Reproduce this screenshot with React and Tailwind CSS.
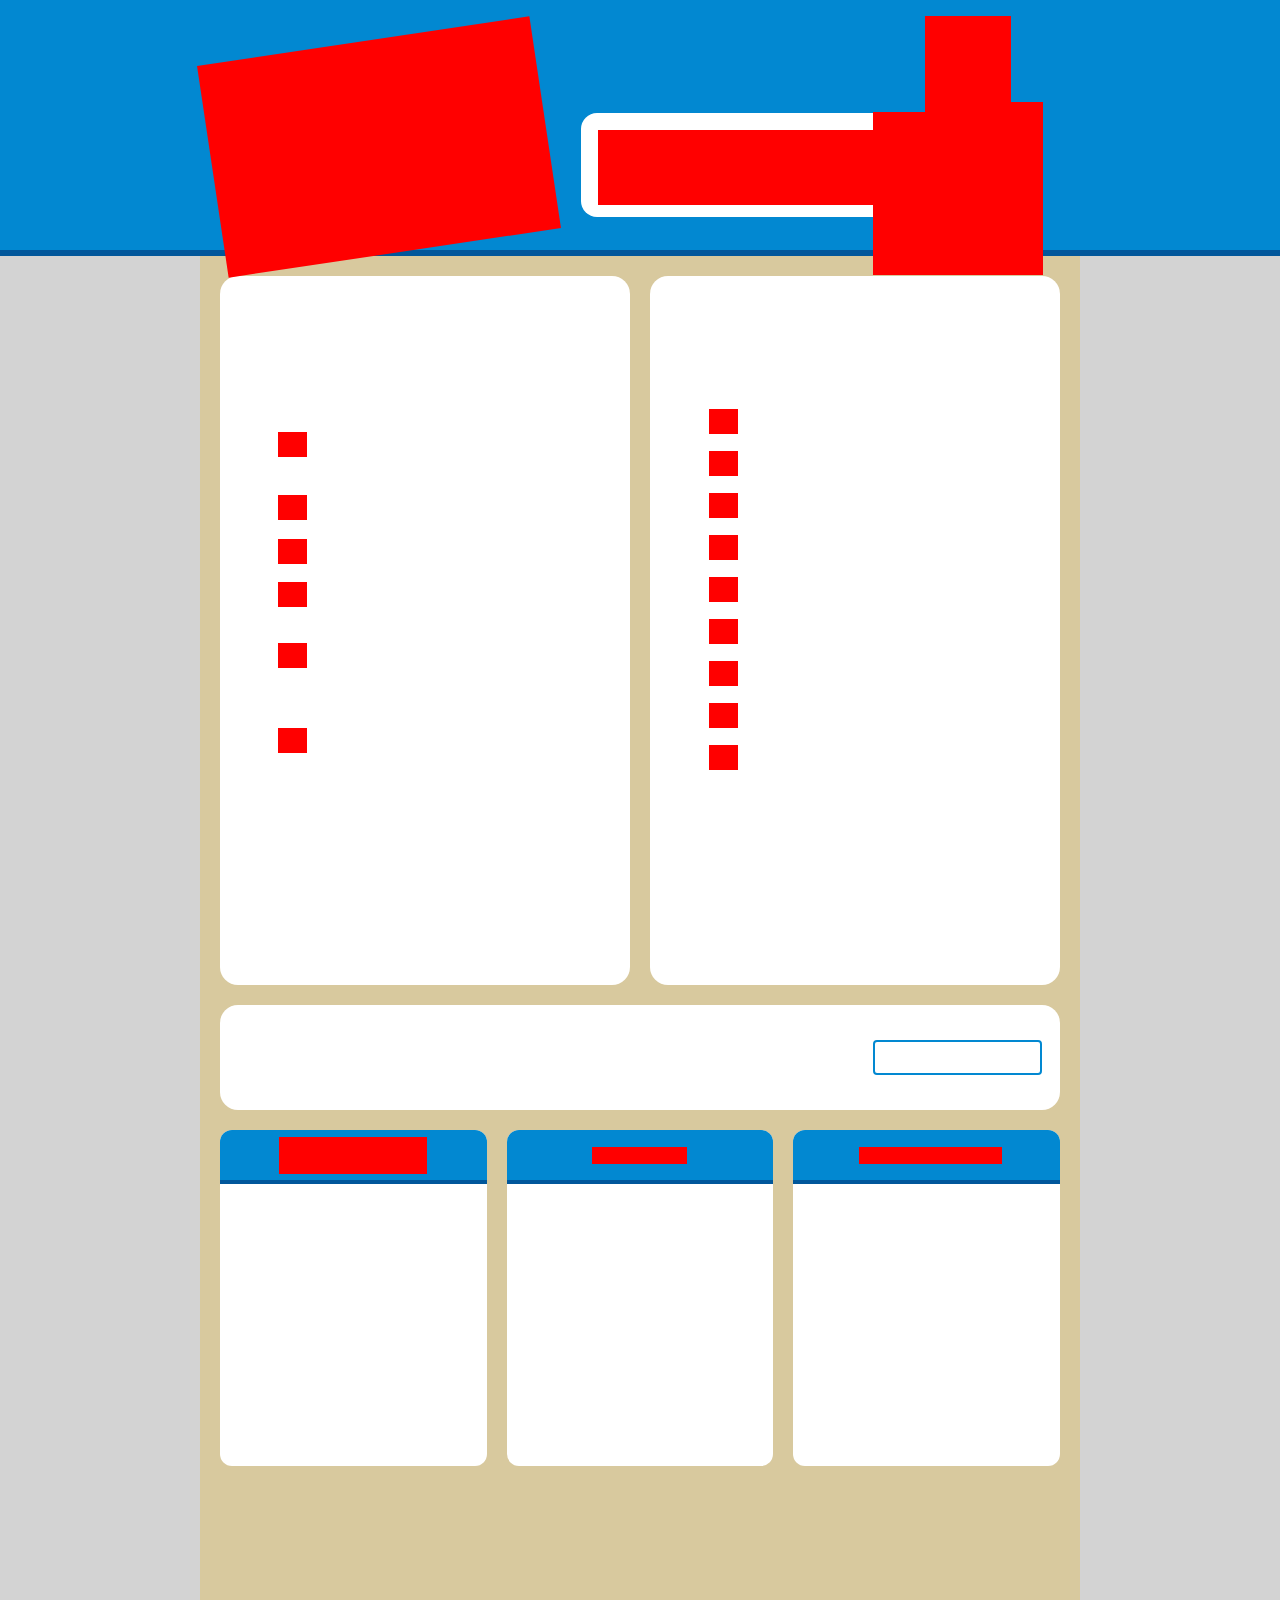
import React from "react";

function Sq({ className = "" }) {
  return <div className={"w-[29px] h-[25px] bg-[#ff0000] " + className} />;
}

function BottomCard({ red }) {
  return (
    <div className="h-[336px] bg-white rounded-xl overflow-hidden flex flex-col">
      <div className="h-[54px] bg-[#0288d1] border-b-4 border-[#01579b] flex items-center justify-center">
        <div className={red} />
      </div>
      <div className="flex-1" />
    </div>
  );
}

export default function App() {
  return (
    <div className="min-h-[1600px] bg-[#d3d3d3] font-['Liberation_Sans',sans-serif]">
      <header className="relative z-10 h-[256px] bg-[#0288d1] border-b-[6px] border-[#01579b]">
        <div className="relative mx-auto w-[880px] h-full">
          {/* rotated logo */}
          <div className="absolute left-[11px] top-[40px] w-[336px] h-[214px] bg-[#ff0000] -rotate-[8.5deg]" />
          {/* search form */}
          <div className="absolute left-[381px] top-[113px] w-[320px] h-[104px] bg-white rounded-l-[16px] pl-[17px] pt-[17px]">
            <div className="h-[75px] w-full bg-[#ff0000]" />
          </div>
          {/* button stack */}
          <div className="absolute left-[725px] top-[16px] w-[86px] h-[100px] bg-[#ff0000]" />
          <div className="absolute left-[811px] top-[102px] w-[32px] h-[173px] bg-[#ff0000]" />
          <div className="absolute left-[673px] top-[112px] w-[170px] h-[163px] bg-[#ff0000]" />
        </div>
      </header>

      <main className="mx-auto w-[880px] min-h-[1344px] bg-[#d8c99e] p-5 flex flex-col gap-5">
        <div className="grid grid-cols-2 gap-5">
          <div className="h-[709px] bg-white rounded-[18px] pl-[58px] pt-[156px] flex flex-col">
            <Sq />
            <Sq className="mt-[38px]" />
            <Sq className="mt-[19px]" />
            <Sq className="mt-[18px]" />
            <Sq className="mt-[36px]" />
            <Sq className="mt-[60px]" />
          </div>
          <div className="h-[709px] bg-white rounded-[18px] pl-[59px] pt-[133px] flex flex-col gap-[17px]">
            <Sq />
            <Sq />
            <Sq />
            <Sq />
            <Sq />
            <Sq />
            <Sq />
            <Sq />
            <Sq />
          </div>
        </div>

        <div className="h-[105px] bg-white rounded-[18px] flex items-center justify-end pr-[18px]">
          <div className="w-[169px] h-[35px] border-2 border-[#0288d1] rounded" />
        </div>

        <div className="grid grid-cols-3 gap-5">
          <BottomCard red="w-[148px] h-[37px] bg-[#ff0000]" />
          <BottomCard red="w-[95px] h-[17px] bg-[#ff0000]" />
          <BottomCard red="w-[143px] h-[17px] bg-[#ff0000] ml-[8px]" />
        </div>
      </main>
    </div>
  );
}
